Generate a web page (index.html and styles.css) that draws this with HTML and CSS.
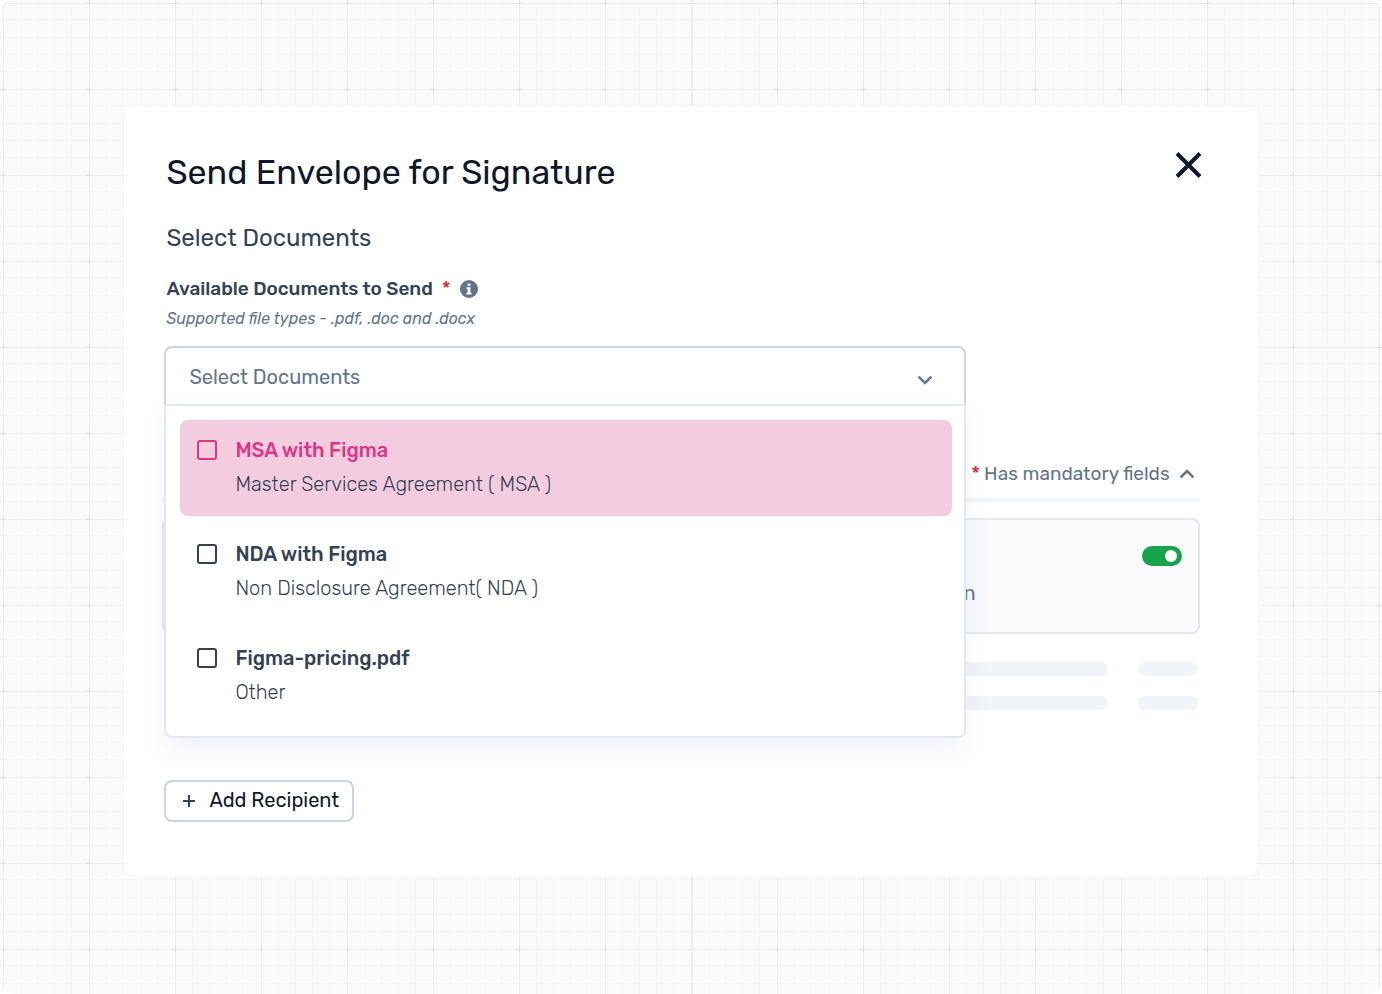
FILE: index.html
```html
<!DOCTYPE html>
<html lang="en">

<head>
    <meta charset="UTF-8">
    <meta name="viewport" content="width=device-width, initial-scale=1.0">
    <title>Send Envelope for Signature</title>
    <link rel="stylesheet" href="styles.css">
</head>

<body>
    <main class="canvas">
        <svg class="grid" aria-hidden="true">
            <defs>
                <pattern id="cells" x="3" y="3" width="86" height="86" patternUnits="userSpaceOnUse">
                    <path d="M17 0h1v86h-1zM34 0h1v86h-1zM51 0h1v86h-1zM68 0h1v86h-1z" fill="#f5f5f5"/>
                    <path d="M0 16h86v1h-86zM0 34h86v1h-86zM0 51h86v1h-86zM0 68h86v1h-86z" fill="#f5f5f5"/>
                    <path d="M0 0h1v86h-1zM0 0h86v1h-86z" fill="#eeeeee"/>
                    <path d="M0 0h1v3h-1zM0 83h1v3h-1zM0 0h3v1h-3zM83 0h3v1h-3z" fill="#e0e0e0"/>
                </pattern>
            </defs>
            <rect width="100%" height="100%" fill="url(#cells)"/>
            <rect x="50%" width="2" height="100%" fill="#eeeeee"/>
        </svg>

        <section class="modal">
            <header class="modal-header">
                <h1>Send Envelope for Signature</h1>
                <button class="close" type="button" aria-label="Close">
                    <svg width="28" height="28" viewBox="0 0 28 28" fill="none" stroke="#0f172a" stroke-width="4">
                        <path d="M3 2.5l23 23M26 2.5l-23 23"/>
                    </svg>
                </button>
            </header>

            <form class="modal-body">
                <h2>Select Documents</h2>
                <div class="label-row">
                    <label for="documents">Available Documents to Send</label>
                    <span class="required">*</span>
                    <svg width="18" height="18" viewBox="0 0 18 18" aria-hidden="true">
                        <circle cx="9" cy="9" r="9" fill="#64748b"/>
                        <path d="M7.6 3.4h2.8v2.4H7.6zM6.6 7.2h3.8v5.6h1.2v1.8H6.4v-1.8h1.2V9h-1z" fill="#fff"/>
                    </svg>
                </div>
                <p class="hint">Supported file types - .pdf, .doc and .docx</p>

                <div class="dropdown">
                    <select id="documents">
                        <option>Select Documents</option>
                    </select>
                    <svg class="arrow" width="16" height="10" viewBox="0 0 16 10" fill="none" stroke="#64748b" stroke-width="2.6">
                        <path d="M1.6 1.6L8 8l6.4-6.4"/>
                    </svg>
                    <div class="menu">
                        <label class="item active">
                            <input type="checkbox">
                            <span class="item-text">
                                <span class="item-title">MSA with Figma</span>
                                <span class="item-type">Master Services Agreement ( MSA )</span>
                            </span>
                        </label>
                        <label class="item">
                            <input type="checkbox">
                            <span class="item-text">
                                <span class="item-title">NDA with Figma</span>
                                <span class="item-type">Non Disclosure Agreement( NDA )</span>
                            </span>
                        </label>
                        <label class="item">
                            <input type="checkbox">
                            <span class="item-text">
                                <span class="item-title">Figma-pricing.pdf</span>
                                <span class="item-type">Other</span>
                            </span>
                        </label>
                    </div>
                </div>

                <div class="section-head">
                    <span class="required">*</span>
                    <span>Has mandatory fields</span>
                    <svg width="16" height="10" viewBox="0 0 16 10" fill="none" stroke="#64748b" stroke-width="2.6">
                        <path d="M1.6 8.4L8 2l6.4 6.4"/>
                    </svg>
                </div>

                <div class="recipient">
                    <label for="recipient-on">n</label>
                    <input class="toggle" id="recipient-on" type="checkbox" checked>
                </div>

                <div class="skeleton">
                    <span></span>
                    <span></span>
                    <span></span>
                    <span></span>
                </div>

                <button class="add" type="button">
                    <svg width="14" height="14" viewBox="0 0 14 14" fill="none" stroke="#334155" stroke-width="2">
                        <path d="M7 1v12M1 7h12"/>
                    </svg>
                    <span>Add Recipient</span>
                </button>
            </form>
        </section>
    </main>
</body>

</html>
```
FILE: styles.css
```css
* {
    box-sizing: border-box;
}

body {
    margin: 0;
    background-color: #fff;
    color: #334155;
    font-family: Rubik, Inter, sans-serif;
    font-size: 20px;
    line-height: 28px;
}

h1, h2, p {
    margin: 0;
    font-weight: 400;
}

button, select {
    font: inherit;
    cursor: pointer;
}

.canvas {
    position: relative;
    min-height: 100vh;
    padding: 106px 9%;
    background-color: #fafafa;
    border-radius: 14px;
    overflow: hidden;
}

.grid {
    position: absolute;
    inset: 0;
    width: 100%;
    height: 100%;
}

.modal {
    position: relative;
    padding: 45px 56px 54px 38px;
    background-color: #fff;
    border-radius: 14px;
}

.modal-header {
    display: flex;
    justify-content: space-between;
    align-items: flex-start;
    padding-left: 4px;
}

h1 {
    font-size: 34px;
    line-height: 44px;
    color: #0f172a;
}

.close {
    padding: 0;
    border: none;
    background: none;
}

.close svg {
    display: block;
}

.modal-body {
    padding-right: 2px;
}

h2 {
    margin: 27px 0 23px 4px;
    font-size: 24px;
    line-height: 32px;
}

.label-row {
    display: flex;
    align-items: center;
    gap: 9px;
    height: 24px;
    margin-left: 4px;
    font-size: 19px;
}

.label-row label {
    font-weight: 500;
}

.required {
    font-size: 20px;
    color: #dc2626;
}

.hint {
    margin: 8px 0 17px 4px;
    font-size: 16px;
    line-height: 20px;
    font-style: italic;
    color: #64748b;
}

.dropdown {
    position: relative;
    margin: 0 234px 0 2px;
}

.dropdown select {
    display: block;
    width: 100%;
    height: 60px;
    padding: 2px 24px 0 23px;
    border: 2px solid #cbd5e1;
    border-radius: 8px 8px 0 0;
    background-color: #fff;
    color: #64748b;
    appearance: none;
}

.arrow {
    position: absolute;
    top: 29px;
    right: 33px;
    pointer-events: none;
}

/* opened list, lies over the recipient section */
.menu {
    position: absolute;
    top: 58px;
    left: 0;
    right: 0;
    z-index: 1;
    display: flex;
    flex-direction: column;
    gap: 8px;
    padding: 14px 12px 12px 14px;
    border: 2px solid #e2e8f0;
    border-radius: 0 0 8px 8px;
    background-color: #fff;
    box-shadow: 0 12px 24px rgba(100, 140, 180, 0.1);
}

.item {
    display: flex;
    gap: 18px;
    padding: 16px 17px 18px;
    border-radius: 8px;
    cursor: pointer;
}

.item input {
    flex: none;
    width: 20px;
    height: 20px;
    margin: 4px 0;
    border: 2px solid #334155;
    border-radius: 3px;
    appearance: none;
}

.item-text {
    display: flex;
    flex-direction: column;
    gap: 6px;
}

.item-title {
    font-weight: 500;
}

.item-type {
    font-weight: 300;
}

.active {
    background-color: #f4cce0;
}

.active input {
    border-color: #db3787;
}

.active .item-title {
    color: #db3787;
}

.section-head {
    display: flex;
    justify-content: flex-end;
    align-items: center;
    gap: 4px;
    margin-top: 54px;
    padding: 0 5px 10px 0;
    border-bottom: 4px solid #f1f5f9;
    font-size: 19px;
    color: #64748b;
}

.section-head svg {
    margin-left: 5px;
}

.recipient {
    display: flex;
    justify-content: flex-end;
    align-items: flex-start;
    gap: 166px;
    height: 116px;
    margin-top: 16px;
    padding: 26px 16px;
    border: 2px solid #e2e8f0;
    border-radius: 8px;
    background-color: #f8fafc;
}

.recipient label {
    padding-top: 33px;
    color: #64748b;
}

.toggle {
    display: flex;
    justify-content: flex-end;
    align-items: center;
    width: 40px;
    height: 20px;
    margin: 0;
    padding: 5px;
    border-radius: 10px;
    background-color: #16a34a;
    appearance: none;
}

.toggle::before {
    content: "";
    width: 12px;
    height: 12px;
    border-radius: 50%;
    background-color: #fff;
}

.skeleton {
    display: grid;
    grid-template-columns: 1fr 60px;
    gap: 20px 30px;
    margin: 28px 2px 70px;
}

.skeleton span {
    height: 14px;
    border-radius: 7px;
    background-color: #f1f5f9;
}

.add {
    display: flex;
    align-items: center;
    gap: 13px;
    height: 42px;
    margin-left: 2px;
    padding: 0 13px 0 16px;
    border: 2px solid #cbd5e1;
    border-radius: 8px;
    background-color: #fff;
    color: #0f172a;
}

.add span {
    padding-bottom: 2px;
}
```
